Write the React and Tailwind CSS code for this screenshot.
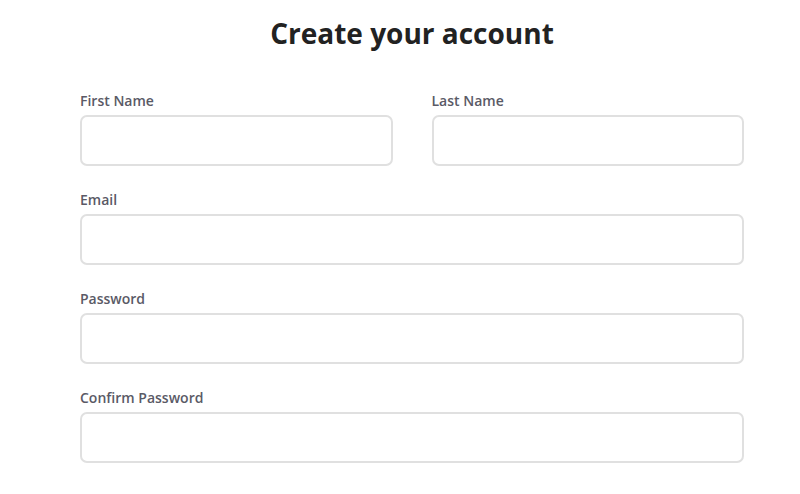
export default function App() {
  const label = "block text-[14px] font-semibold text-[#5a5a66] mb-[5px] leading-[18px]";
  const input =
    "block w-full h-[51px] rounded-[7px] border-2 border-[#e0e0e0] bg-white px-3 outline-none";

  return (
    <div
      className="min-h-screen bg-white"
      style={{ fontFamily: '"Open Sans", "Noto Sans", sans-serif' }}
    >
      <div className="ml-[80px] w-[664px] pt-[13px]">
        <h1 className="text-center text-[28px] font-bold text-[#222] leading-[40px] mb-[39px]">
          Create your account
        </h1>

        <form className="flex flex-col gap-[25px]">
          <div className="grid grid-cols-2 gap-[39px]">
            <div>
              <label className={label}>First Name</label>
              <input className={input} />
            </div>
            <div>
              <label className={label}>Last Name</label>
              <input className={input} />
            </div>
          </div>

          <div>
            <label className={label}>Email</label>
            <input type="email" className={input} />
          </div>

          <div>
            <label className={label}>Password</label>
            <input type="password" className={input} />
          </div>

          <div>
            <label className={label}>Confirm Password</label>
            <input type="password" className={input} />
          </div>
        </form>
      </div>
    </div>
  );
}
